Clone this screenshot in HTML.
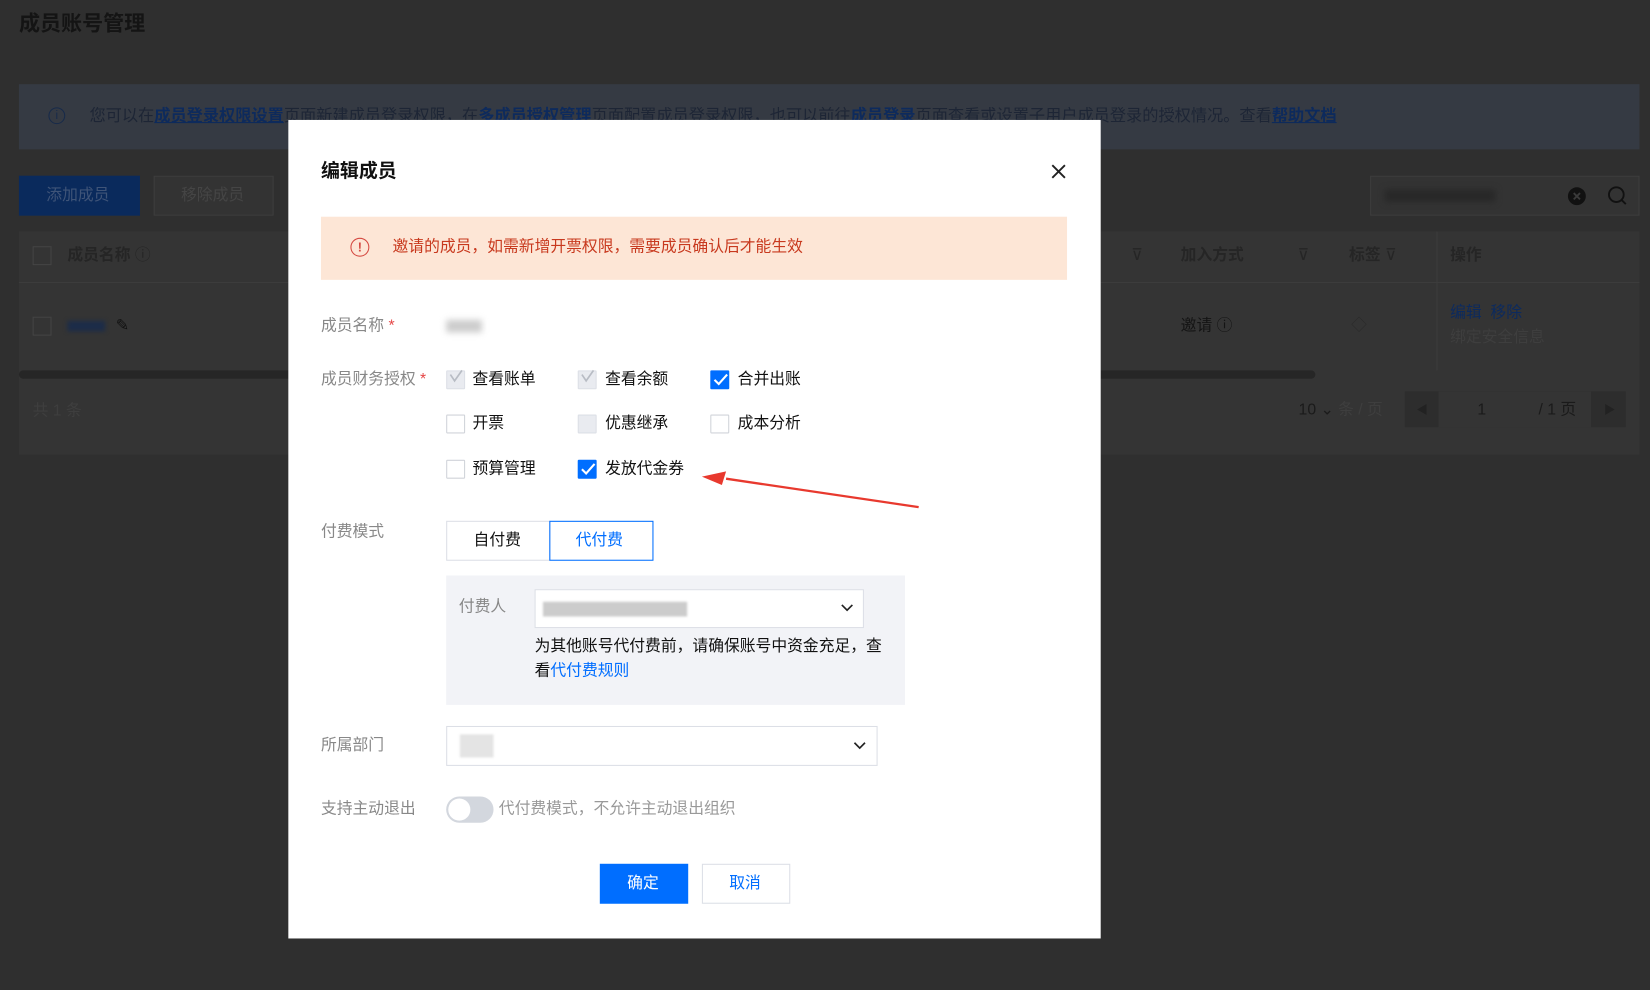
<!DOCTYPE html>
<html><head><meta charset="utf-8">
<style>
html,body{margin:0;padding:0;width:1650px;height:990px;overflow:hidden;background:#2f2f2f}
#w{position:absolute;left:0;top:0;width:1568px;height:941px;transform:scale(1.0523,1.0521);transform-origin:0 0;font-family:"Liberation Sans","Noto Sans CJK SC",sans-serif;font-size:15px;color:#111}
.a{position:absolute}
.t{position:absolute;white-space:nowrap;line-height:20px}
.cb{position:absolute;width:18px;height:18px;border:1px solid #d0d3d9;box-sizing:border-box;background:#fff;border-radius:1px}
.cb.on{background:#006eff;border-color:#006eff}
.cb.dis{background:#e9ebf0;border-color:#dcdfe6}
.lbl{position:absolute;color:#888;font-size:15px;white-space:nowrap;line-height:20px}
</style></head><body><div id="w">
<!-- background page -->
<div class="t" style="left:18px;top:11px;font-size:20px;font-weight:bold;color:#141414;line-height:24px">成员账号管理</div>
<div class="a" style="left:18px;top:80px;width:1540px;height:62px;background:#353a43"></div>
<div class="a" style="left:46px;top:102px;width:16px;height:16px;border:1.5px solid #172a4a;border-radius:50%;box-sizing:border-box;color:#172a4a;font-size:11px;text-align:center;line-height:14px">i</div>
<div class="t" style="left:85px;top:101px;color:#1d2535;font-size:15.4px">您可以在<b style="color:#0d2a5c;text-decoration:underline">成员登录权限设置</b>页面新建成员登录权限，在<b style="color:#0d2a5c">多成员授权管理</b>页面配置成员登录权限，也可以前往<b style="color:#0d2a5c">成员登录</b>页面查看或设置子用户成员登录的授权情况。查看<b style="color:#0d2a5c;text-decoration:underline">帮助文档</b></div>
<div class="a" style="left:18px;top:167px;width:115px;height:38px;background:#0a2a5c"></div>
<div class="t" style="left:44px;top:176px;color:#3f5478">添加成员</div>
<div class="a" style="left:146px;top:167px;width:114px;height:38px;border:1px solid #3d3d3d;box-sizing:border-box;background:#333"></div>
<div class="t" style="left:172px;top:176px;color:#454545">移除成员</div>
<div class="a" style="left:1302px;top:167px;width:256px;height:38px;border:1px solid #3d3d3d;box-sizing:border-box;background:#333"></div>
<div class="a" style="left:1316px;top:180px;width:105px;height:12px;background:#282828;filter:blur(3px)"></div>
<div class="a" style="left:1490px;top:178px;width:17px;height:17px;background:#111;border-radius:50%"></div>
<svg class="a" style="left:1490px;top:178px" width="17" height="17"><path d="M5.5 5.5l6 6M11.5 5.5l-6 6" stroke="#3a3a3a" stroke-width="1.8"/></svg>
<svg class="a" style="left:1526px;top:175px" width="22" height="22"><circle cx="10" cy="10" r="7" stroke="#111" stroke-width="1.8" fill="none"/><path d="M15 15l4 4" stroke="#111" stroke-width="1.8"/></svg>
<div class="a" style="left:18px;top:220px;width:1540px;height:212px;background:#343434"></div>
<div class="a" style="left:18px;top:268px;width:1540px;height:1px;background:#3c3c3c"></div>
<div class="a" style="left:1365px;top:220px;width:1px;height:132px;background:#3c3c3c"></div>
<div class="a" style="left:18px;top:352px;width:1232px;height:8px;background:#262626;border-radius:4px"></div>
<div class="a" style="left:31px;top:234px;width:18px;height:18px;border:1px solid #444;box-sizing:border-box"></div>
<div class="t" style="left:64px;top:233px;color:#252525;font-weight:bold">成员名称 <span style="font-weight:normal">ⓘ</span></div>
<div class="t" style="left:1075px;top:233px;color:#252525">⊽</div>
<div class="t" style="left:1122px;top:233px;color:#252525;font-weight:bold">加入方式</div>
<div class="t" style="left:1233px;top:233px;color:#252525">⊽</div>
<div class="t" style="left:1282px;top:233px;color:#252525;font-weight:bold">标签 <span style="font-weight:normal">⊽</span></div>
<div class="t" style="left:1378px;top:233px;color:#252525;font-weight:bold">操作</div>
<div class="a" style="left:31px;top:301px;width:18px;height:18px;border:1px solid #444;box-sizing:border-box"></div>
<div class="a" style="left:64px;top:305px;width:36px;height:10px;background:#1c2c48;filter:blur(2px)"></div>
<div class="t" style="left:110px;top:300px;color:#111">✎</div>
<div class="t" style="left:1122px;top:300px;color:#141414">邀请 ⓘ</div>
<div class="t" style="left:1284px;top:300px;color:#2a2a2a">◇</div>
<div class="t" style="left:1378px;top:288px;color:#0c2a5e">编辑&nbsp; 移除</div>
<div class="t" style="left:1378px;top:311px;color:#3e3e3e">绑定安全信息</div>
<div class="t" style="left:31px;top:381px;color:#3e3e3e">共 1 条</div>
<div class="t" style="left:1234px;top:380px;color:#1a1a1a">10 ⌄ <span style="color:#3e3e3e">条 / 页</span></div>
<div class="a" style="left:1335px;top:372px;width:210px;height:34px;background:#2d2d2d"></div>
<div class="a" style="left:1367px;top:372px;width:145px;height:34px;background:#343434"></div>
<div class="t" style="left:1404px;top:380px;color:#1a1a1a">1</div>
<div class="t" style="left:1462px;top:380px;color:#1a1a1a">/ 1 页</div>
<div class="t" style="left:1346px;top:380px;color:#222;font-size:11px">◀</div>
<div class="t" style="left:1524px;top:380px;color:#222;font-size:11px">▶</div>

<!-- modal -->
<div class="a" style="left:274px;top:114px;width:772px;height:778px;background:#fff"></div>
<div class="t" style="left:305px;top:150px;font-size:18px;font-weight:bold;line-height:24px">编辑成员</div>
<svg class="a" style="left:999px;top:156px" width="14" height="14"><path d="M1 1L13 13M13 1L1 13" stroke="#222" stroke-width="1.8"/></svg>
<div class="a" style="left:305px;top:206px;width:709px;height:60px;background:#fde6d6"></div>
<div class="a" style="left:333px;top:226px;width:16px;height:16px;border:1.5px solid #d54941;border-radius:50%;color:#d54941;font-size:12px;text-align:center;line-height:16px;font-weight:bold">!</div>
<div class="t" style="left:373px;top:225px;color:#c8391e">邀请的成员，如需新增开票权限，需要成员确认后才能生效</div>

<div class="lbl" style="left:305px;top:300px">成员名称<span style="color:#e54545"> *</span></div>
<div class="a" style="left:424px;top:304px;width:34px;height:12px;background:#ccc;filter:blur(3px)"></div>
<div class="lbl" style="left:305px;top:351px">成员财务授权<span style="color:#e54545"> *</span></div>

<div class="cb dis" style="left:424px;top:352px"></div><div class="t" style="left:449px;top:351px">查看账单</div>
<div class="cb dis" style="left:549px;top:352px"></div><div class="t" style="left:575px;top:351px">查看余额</div>
<div class="cb on" style="left:675px;top:352px"></div><div class="t" style="left:701px;top:351px">合并出账</div>
<div class="cb" style="left:424px;top:394px"></div><div class="t" style="left:449px;top:393px">开票</div>
<div class="cb dis" style="left:549px;top:394px"></div><div class="t" style="left:575px;top:393px">优惠继承</div>
<div class="cb" style="left:675px;top:394px"></div><div class="t" style="left:701px;top:393px">成本分析</div>
<div class="cb" style="left:424px;top:437px"></div><div class="t" style="left:449px;top:436px">预算管理</div>
<div class="cb on" style="left:549px;top:437px"></div><div class="t" style="left:575px;top:436px">发放代金券</div>

<div class="lbl" style="left:305px;top:496px">付费模式</div>
<div class="a" style="left:424px;top:495px;width:99px;height:38px;border:1px solid #dcdfe6;box-sizing:border-box"></div>
<div class="t" style="left:450px;top:504px">自付费</div>
<div class="a" style="left:522px;top:495px;width:99px;height:38px;border:1px solid #006eff;box-sizing:border-box"></div>
<div class="t" style="left:547px;top:504px;color:#006eff">代付费</div>
<div class="a" style="left:424px;top:547px;width:436px;height:123px;background:#f2f3f7"></div>
<div class="lbl" style="left:436px;top:567px">付费人</div>
<div class="a" style="left:508px;top:560px;width:313px;height:37px;background:#fff;border:1px solid #dcdfe6;box-sizing:border-box"></div>
<div class="a" style="left:516px;top:572px;width:137px;height:14px;background:#ccc;filter:blur(1px)"></div>
<div class="t" style="left:508px;top:605px">为其他账号代付费前，请确保账号中资金充足，查</div>
<div class="t" style="left:508px;top:628px">看<span style="color:#006eff">代付费规则</span></div>

<div class="lbl" style="left:305px;top:699px">所属部门</div>
<div class="a" style="left:424px;top:690px;width:410px;height:38px;background:#fff;border:1px solid #dcdfe6;box-sizing:border-box"></div>
<div class="a" style="left:437px;top:698px;width:32px;height:22px;background:#e4e4e4;filter:blur(1px)"></div>

<div class="lbl" style="left:305px;top:759px">支持主动退出</div>
<div class="a" style="left:424px;top:757px;width:45px;height:25px;background:#d3d7de;border-radius:13px"></div>
<div class="a" style="left:426px;top:759px;width:21px;height:21px;background:#fff;border-radius:50%"></div>
<div class="t" style="left:474px;top:759px;color:#999">代付费模式，不允许主动退出组织</div>

<div class="a" style="left:570px;top:821px;width:84px;height:38px;background:#006eff"></div>
<div class="t" style="left:596px;top:830px;color:#fff">确定</div>
<div class="a" style="left:667px;top:821px;width:84px;height:38px;border:1px solid #dcdfe6;box-sizing:border-box"></div>
<div class="t" style="left:693px;top:830px;color:#006eff">取消</div>

<svg class="a" style="left:0;top:0" width="1568" height="941">
<path d="M428 356l4 6 7-10M553 356l4 6 7-10" stroke="#b8bcc4" stroke-width="1.6" fill="none"/>
<path d="M679 361l4 4 8-9M553 446l4 4 8-9" stroke="#fff" stroke-width="2" fill="none"/>
<path d="M873 482L690 455" stroke="#e8392e" stroke-width="2.2"/>
<path d="M667 453L690 448L686 461Z" fill="#e8392e"/>
<path d="M800 575l5 5 5-5M812 706l5 5 5-5" stroke="#222" stroke-width="1.6" fill="none"/>
</svg>
</div></body></html>
